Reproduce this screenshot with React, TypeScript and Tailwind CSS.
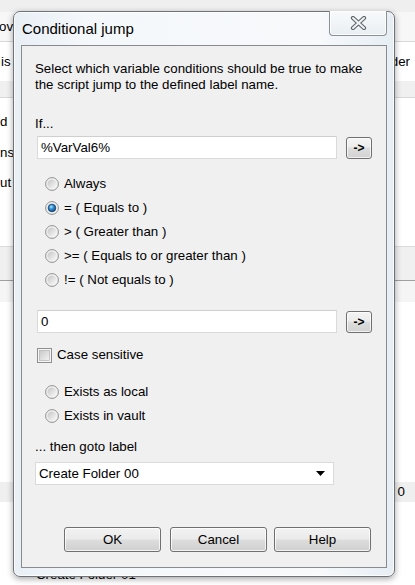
import React from "react";

const font = { fontFamily: '"Liberation Sans", Arial, sans-serif' };

function Radio({ checked, id }: { checked?: boolean; id: string }) {
  return (
    <svg width="14" height="14" viewBox="0 0 14 14" className="shrink-0">
      <defs>
        <linearGradient id={`ri-${id}`} x1="0" y1="0" x2="1" y2="1">
          <stop offset="0" stopColor="#c4c4c4" />
          <stop offset="1" stopColor="#fbfbfb" />
        </linearGradient>
        <radialGradient id={`rs-${id}`} cx="40%" cy="35%" r="70%">
          <stop offset="0" stopColor="#bfe9ff" />
          <stop offset="0.35" stopColor="#3a9ce0" />
          <stop offset="1" stopColor="#0a3c72" />
        </radialGradient>
      </defs>
      <circle cx="7" cy="7" r="6.4" fill="#f3f3f3" stroke="#8e8f8f" strokeWidth="1" />
      <circle cx="7" cy="7" r="4.6" fill={`url(#ri-${id})`} />
      {checked && (
        <circle cx="7" cy="7" r="3.8" fill={`url(#rs-${id})`} stroke="#17406b" strokeWidth="0.8" />
      )}
    </svg>
  );
}

function Checkbox() {
  return (
    <svg width="15" height="15" viewBox="0 0 15 15" className="shrink-0">
      <defs>
        <linearGradient id="cbg" x1="0" y1="0" x2="1" y2="1">
          <stop offset="0" stopColor="#c8c8c8" />
          <stop offset="1" stopColor="#f4f4f4" />
        </linearGradient>
      </defs>
      <rect x="0.5" y="0.5" width="14" height="14" fill="#f6f6f6" stroke="#8e8f8f" />
      <rect x="2.5" y="2.5" width="10" height="10" fill="url(#cbg)" stroke="#a8a8a8" strokeWidth="0.6" />
    </svg>
  );
}

function ArrowBtn() {
  return (
    <div className="ml-[9px] w-[26px] h-[22px] rounded-[3px] border border-[#707070] bg-[linear-gradient(#f4f4f4_0%,#ececec_45%,#dddddd_50%,#d2d2d2_100%)] flex items-center justify-center text-[12px] font-bold text-black leading-none shadow-[inset_0_0_0_1px_rgba(255,255,255,0.7)]">
      -&gt;
    </div>
  );
}

function WinButton({ label, className }: { label: string; className?: string }) {
  return (
    <div
      className={`w-[97px] h-[25px] rounded-[3px] border border-[#707070] bg-[linear-gradient(#f2f2f2_0%,#ebebeb_48%,#dddddd_52%,#cfcfcf_100%)] shadow-[inset_0_0_0_1px_rgba(255,255,255,0.75)] flex items-center justify-center text-[13.3px] text-black ${className ?? ""}`}
    >
      {label}
    </div>
  );
}

export default function App() {
  return (
    <div className="relative w-[415px] h-[585px] overflow-hidden bg-white text-[13.3px] text-black" style={font}>
      {/* background window */}
      <div className="flex flex-col w-full h-full">
        <div className="h-[12px] bg-[#efefef]" />
        <div className="h-[31px] bg-[#f7f7f7] border-b border-[#d8d8d8] flex items-center">
          <span className="-ml-[1px]">ov</span>
        </div>
        <div className="h-[39px] bg-white flex items-center justify-between">
          <span className="ml-[1px]">is</span>
          <span className="mr-[5px]">der</span>
        </div>
        <div className="h-[18px] bg-[#f0f0f0] border-b border-[#d8d8d8]" />
        <div className="h-[150px] bg-white flex flex-col pt-[9px]">
          <div className="h-[30px] flex items-center">d</div>
          <div className="h-[31px] flex items-center">nsi</div>
          <div className="h-[30px] flex items-center">ut</div>
        </div>
        <div className="h-[35px] bg-[#f0f0f0] border-t border-[#dcdcdc] border-b border-b-[#a0a0a0]" />
        <div className="h-[22px] bg-[#f5f5f5]" />
        <div className="h-[183px] bg-white" />
        <div className="h-[20px] bg-[#efefef] flex items-center justify-end">
          <span className="mr-[10px]">0</span>
        </div>
        <div className="flex-1 bg-white pl-[36px] pt-[63px]">Create Folder 01</div>
      </div>

      {/* dialog */}
      <div className="absolute left-[13px] top-[11px] w-[382px] h-[566px] rounded-[7px] border border-[#6f7377] bg-[linear-gradient(90deg,#e8eff5_0%,#f5f8fb_20%,#f7f9fb_80%,#e6eef4_100%)] shadow-[0_2px_6px_rgba(0,0,0,0.35),inset_0_0_0_1px_rgba(255,255,255,0.8)] flex flex-col">
        <div className="relative h-[33px] flex items-center pl-[8px] pt-[2px]">
          <span className="text-[15px] text-black">Conditional jump</span>
          <div className="absolute right-[7px] -top-px w-[58px] h-[25px] rounded-b-[4px] border border-t-0 border-[#8c9196] bg-[linear-gradient(#f8fafc,#e9eef2)] shadow-[inset_0_0_0_1px_rgba(255,255,255,0.8)] flex items-center justify-center">
            <svg width="17" height="14" viewBox="0 0 17 14">
              <path d="M3 2 L14 12 M14 2 L3 12" stroke="#5f6468" strokeWidth="4.2" strokeLinecap="round" />
              <path d="M3 2 L14 12 M14 2 L3 12" stroke="#f2f4f6" strokeWidth="2" strokeLinecap="round" />
            </svg>
          </div>
        </div>

        <div className="mx-[7px] mb-[8px] flex-1 border border-[#878b8f] bg-[#f0f0f0] flex flex-col px-[13px]">
          <div className="mt-[15px] leading-[16px] whitespace-nowrap">
            Select which variable conditions should be true to make
            <br />
            the script jump to the defined label name.
          </div>

          <div className="mt-[23px] leading-[16px]">If...</div>

          <div className="mt-[4px] flex items-center">
            <div className="ml-[2px] w-[300px] h-[23px] bg-white border border-[#dadada] border-t-[#cfcfcf] flex items-center pl-[3px]">
              %VarVal6%
            </div>
            <ArrowBtn />
          </div>

          <div className="mt-[13px] ml-[10px] flex flex-col">
            {[
              ["Always", false],
              ["= ( Equals to )", true],
              ["> ( Greater than )", false],
              [">= ( Equals to or greater than )", false],
              ["!= ( Not equals to )", false],
            ].map(([label, checked], i) => (
              <div key={i} className="h-[24px] flex items-center gap-[5px]">
                <Radio id={`a${i}`} checked={checked as boolean} />
                <span className="whitespace-pre">{label as string}</span>
              </div>
            ))}
          </div>

          <div className="mt-[18px] flex items-center">
            <div className="ml-[2px] w-[300px] h-[23px] bg-white border border-[#dadada] border-t-[#cfcfcf] flex items-center pl-[3px]">
              0
            </div>
            <ArrowBtn />
          </div>

          <div className="mt-[14px] h-[16px] ml-[2px] flex items-center gap-[5px]">
            <Checkbox />
            <span>Case sensitive</span>
          </div>

          <div className="mt-[17px] ml-[10px] flex flex-col">
            {["Exists as local", "Exists in vault"].map((label, i) => (
              <div key={i} className="h-[24px] flex items-center gap-[5px]">
                <Radio id={`b${i}`} />
                <span>{label}</span>
              </div>
            ))}
          </div>

          <div className="mt-[11px] leading-[16px]">... then goto label</div>

          <div className="mt-[7px] w-[299px] h-[23px] bg-white border border-[#dadada] flex items-center justify-between pl-[3px] pr-[8px]">
            <span>Create Folder 00</span>
            <svg width="9" height="5" viewBox="0 0 9 5">
              <polygon points="0,0 9,0 4.5,5" fill="#000" />
            </svg>
          </div>

          <div className="mt-[42px] ml-[29px] flex">
            <WinButton label="OK" />
            <WinButton label="Cancel" className="ml-[9px]" />
            <WinButton label="Help" className="ml-[7px]" />
          </div>
        </div>
      </div>
    </div>
  );
}
